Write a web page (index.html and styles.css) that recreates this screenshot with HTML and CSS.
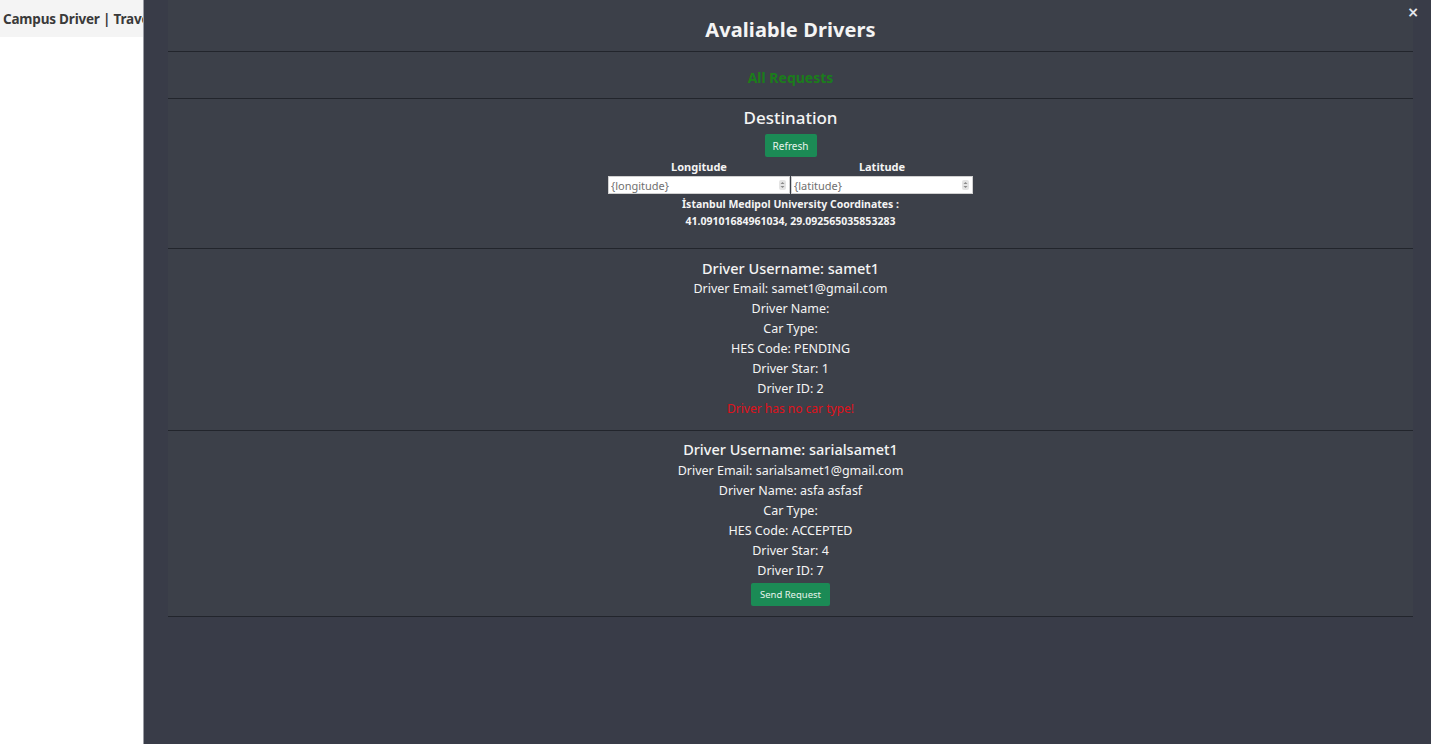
FILE: index.html
```html
<!DOCTYPE html>
<html>
<head>
<meta charset="utf-8">
<link rel="stylesheet" href="styles.css">
</head>
<body>
<header class="navbar"><span class="brand">Campus Driver | Travel with us</span></header>
<div class="modal">
  <button class="close">×</button>
  <div class="sheet">
    <section class="sec sec-title"><h1>Avaliable Drivers</h1></section>
    <section class="sec sec-req"><span class="req">All Requests</span></section>
    <section class="sec sec-dest">
      <h2>Destination</h2>
      <button class="btn btn-refresh">Refresh</button>
      <div class="coords">
        <label class="field"><span class="lbl">Longitude</span><span class="box"><input type="number" placeholder="{longitude}"><svg class="spin" width="7" height="10" viewBox="0 0 7 10"><rect x="0" y="0" width="7" height="10" rx="2" fill="#e4e4e4"/><path d="M1.5 4 L3.5 2 L5.5 4Z M1.5 6 L3.5 8 L5.5 6Z" fill="#8a8a8a"/></svg></span></label>
        <label class="field"><span class="lbl">Latitude</span><span class="box"><input type="number" placeholder="{latitude}"><svg class="spin" width="7" height="10" viewBox="0 0 7 10"><rect x="0" y="0" width="7" height="10" rx="2" fill="#e4e4e4"/><path d="M1.5 4 L3.5 2 L5.5 4Z M1.5 6 L3.5 8 L5.5 6Z" fill="#8a8a8a"/></svg></span></label>
      </div>
      <p class="uni">İstanbul Medipol University Coordinates :<br>41.09101684961034, 29.092565035853283</p>
    </section>
    <section class="sec driver d1">
      <h3>Driver Username: samet1</h3>
      <p>Driver Email: samet1@gmail.com</p>
      <p>Driver Name:</p>
      <p>Car Type:</p>
      <p>HES Code: PENDING</p>
      <p>Driver Star: 1</p>
      <p>Driver ID: 2</p>
      <p class="warn">Driver has no car type!</p>
    </section>
    <section class="sec driver d2">
      <h3>Driver Username: sarialsamet1</h3>
      <p>Driver Email: sarialsamet1@gmail.com</p>
      <p>Driver Name: asfa asfasf</p>
      <p>Car Type:</p>
      <p>HES Code: ACCEPTED</p>
      <p>Driver Star: 4</p>
      <p>Driver ID: 7</p>
      <button class="btn btn-send">Send Request</button>
    </section>
  </div>
</div>
</body>
</html>
```
FILE: styles.css
```css
* { box-sizing: border-box; }
html, body { margin: 0; padding: 0; height: 100%; }
body {
  background: #ffffff;
  font-family: "Noto Sans", "Open Sans", sans-serif;
  color: #f1f1f1;
  overflow: hidden;
}
.navbar {
  height: 37px;
  background: #f4f4f4;
  display: flex;
  align-items: center;
  padding-left: 3px;
}
.brand {
  color: #3a3a3a;
  font-weight: 700;
  font-size: 13.5px;
  letter-spacing: -0.2px;
  white-space: nowrap;
}
.modal {
  position: absolute;
  left: 143px;
  top: 0;
  right: 0;
  bottom: 0;
  background: #393c48;
  border-left: 1px solid #9a9ca4;
  padding-left: 24px;
  padding-right: 18px;
}
.close {
  position: absolute;
  right: 12px;
  top: 4px;
  background: none;
  border: 0;
  color: #e4e6ec;
  font-size: 14px;
  font-weight: 700;
  padding: 0;
  font-family: "DejaVu Sans", sans-serif;
  cursor: pointer;
}
.sheet {
  background: #3c4049;
  text-align: center;
}
.sec {
  border-bottom: 1px solid #22252c;
  display: flex;
  flex-direction: column;
  align-items: center;
}
.sec-title { height: 52px; justify-content: center; padding-top: 7px; }
h1 {
  margin: 0;
  font-size: 20px;
  font-weight: 700;
  color: #f4f4f4;
  letter-spacing: 0.1px;
}
.sec-req { height: 47px; justify-content: center; padding-top: 4px; }
.req {
  color: #1b7d1b;
  font-weight: 700;
  font-size: 14px;
}
.sec-dest { height: 150px; padding-top: 8px; }
h2 {
  margin: 0;
  font-size: 17px;
  font-weight: 500;
  line-height: 22px;
  color: #f4f4f4;
}
.btn {
  background: #1b8a55;
  color: #e6f4ec;
  border: 0;
  border-radius: 2px;
  font-family: "Noto Sans", sans-serif;
  font-size: 10px;
  padding: 0;
  cursor: pointer;
}
.btn-refresh { width: 52px; height: 23px; margin-top: 5px; }
.coords { display: flex; gap: 1px; margin-top: 3px; }
.field { display: flex; flex-direction: column; align-items: center; }
.lbl { font-size: 11px; font-weight: 700; line-height: 14px; color: #f4f4f4; }
.box { position: relative; display: block; margin-top: 2px; }
.field input {
  display: block;
  width: 182px;
  height: 18px;
  border: 1px solid #d0d0d0;
  padding: 0 2px;
  font-family: "Noto Sans", sans-serif;
  font-size: 11px;
  background: #fff;
  color: #333;
}
.field input::placeholder { color: #707070; }
.spin { position: absolute; right: 4px; top: 4px; }
.uni {
  margin: 2px 0 0;
  font-size: 10.5px;
  font-weight: 700;
  line-height: 17px;
  color: #f4f4f4;
}
.driver { padding-top: 9px; }
.d1 { height: 182px; }
.d2 { height: 186px; padding-top: 8px; }
.d2 h3 { margin-bottom: 1px; }
h3 {
  margin: 0;
  font-size: 14.5px;
  font-weight: 500;
  line-height: 21px;
  color: #f4f4f4;
}
.driver p {
  margin: 0;
  font-size: 12.5px;
  line-height: 20px;
  color: #f4f4f4;
}
.driver p.warn { color: #e0101a; font-size: 12px; }
.btn-send { width: 79px; height: 23px; margin-top: 2px; font-size: 9.5px; }
```
